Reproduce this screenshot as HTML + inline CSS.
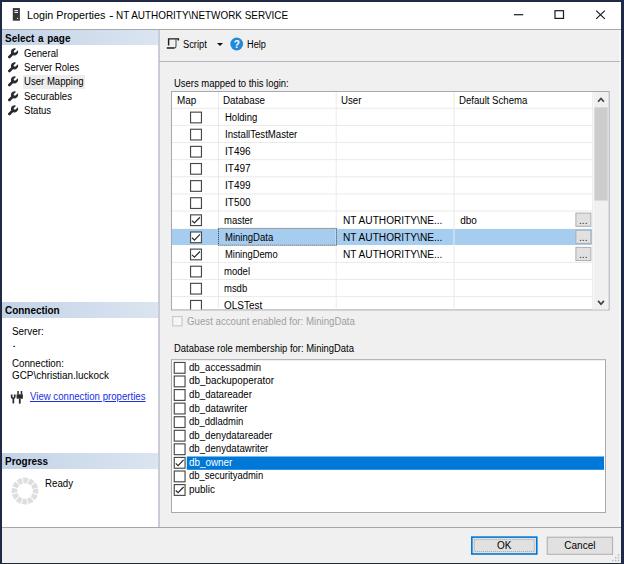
<!DOCTYPE html>
<html><head><meta charset="utf-8"><title>Login Properties</title>
<style>
html,body{margin:0;padding:0;}
body{width:624px;height:564px;overflow:hidden;background:#1c2b4b;position:relative;font-family:"Liberation Sans",sans-serif;font-size:10px;color:#000;}
.abs,.t{position:absolute;}
.t{white-space:nowrap;line-height:13px;height:13px;transform-origin:0 50%;transform:scaleX(0.935);}
#frame{position:absolute;left:1px;top:1px;width:621px;height:563px;background:#23283a;}
#win{position:absolute;left:2px;top:2px;width:619px;height:561px;background:#f0f0f0;}
#title{position:absolute;left:2px;top:2px;width:619px;height:27px;background:#fff;}
#titleline{position:absolute;left:2px;top:29px;width:619px;height:1px;background:#a9a9a9;}
#left{position:absolute;left:2px;top:30px;width:156px;height:497px;background:#fff;}
.hdr{position:absolute;left:2px;width:156px;height:15px;background:linear-gradient(90deg,#c3d3e7 0%,#dbe5f1 100%);}
.hdr span{position:absolute;left:3px;top:1.600px;font-weight:bold;font-size:10.3px;line-height:13px;white-space:nowrap;transform-origin:0 50%;transform:scaleX(0.965);word-spacing:1px;}
.cb{position:absolute;width:11px;height:11px;border:1px solid #333;background:#fff;box-sizing:content-box;}
.hl{position:absolute;height:1px;background:#e8e8e8;}
.vl{position:absolute;width:1px;background:#e8e8e8;}
</style></head><body>
<div id="frame"></div>
<div id="win"></div>
<div id="title"></div>
<div id="titleline"></div>
<div id="left"></div>
<svg class="abs" style="left:0;top:0" width="624" height="564" viewBox="0 0 624 564"><rect x="158.400" y="30" width="1.300" height="497" fill="#b6bac6"/><rect x="619.500" y="30" width="1" height="497" fill="#fbfbfb"/></svg>

<!-- title -->
<svg class="abs" style="left:0;top:0" width="40" height="30" viewBox="0 0 40 30"><rect x="12.800" y="8.100" width="7.100" height="12.600" fill="#363636"/><rect x="14.400" y="10" width="3.600" height="1.100" fill="#e8e8e8"/><rect x="14.400" y="11.900" width="3.600" height="1.100" fill="#e8e8e8"/><rect x="17" y="17.900" width="1.100" height="1.100" fill="#f4f4f4"/></svg>
<div class="abs" id="ttl" style="left:0;top:7.700px;width:300px;height:15px;font-size:11.200px"><span class="t" style="left:27.200px;top:0;line-height:15px;height:15px;transform:scaleX(0.962)">Login Properties</span> <span class="t" style="left:108.500px;top:0;line-height:15px;height:15px;transform:scaleX(1.23)">-</span> <span class="t" style="left:116.100px;top:0;line-height:15px;height:15px;transform:scaleX(0.886)">NT AUTHORITY\NETWORK SERVICE</span></div>
<svg class="abs" style="left:500px;top:2px" width="121" height="27" viewBox="0 0 121 27">
<path d="M14 12.700h9.200" stroke="#1a1a1a" stroke-width="1.200" fill="none"/>
<rect x="55" y="8.700" width="8.500" height="7.700" stroke="#1a1a1a" stroke-width="1.200" fill="none"/>
<path d="M96.200 8.600l8.600 8.300M104.800 8.600l-8.600 8.300" stroke="#1a1a1a" stroke-width="1.200" fill="none"/>
</svg>

<!-- left panel -->
<div class="hdr" style="top:30px"><span>Select a page</span></div>
<div class="abs" style="left:22.500px;top:75px;width:62.500px;height:13.500px;background:#ededed"></div>
<svg class="abs" style="left:8px;top:47.5px" width="11" height="11" viewBox="0 0 11 11"><g transform="translate(6.500 3.900) rotate(45)" fill="#2b2b2b"><path d="M1.200 -3.400A3.600 3.600 0 1 1 -1.200 -3.400L-1.200 -0.600A1.200 1.200 0 0 0 1.200 -0.600Z"/><path d="M-1.350 2.500h2.700v4.700a1.350 1.350 0 0 1 -2.700 0Z"/></g></svg>
<div class="t" style="left:23.600px;top:46.6px;transform:scaleX(0.958)">General</div>
<svg class="abs" style="left:8px;top:61.9px" width="11" height="11" viewBox="0 0 11 11"><g transform="translate(6.500 3.900) rotate(45)" fill="#2b2b2b"><path d="M1.200 -3.400A3.600 3.600 0 1 1 -1.200 -3.400L-1.200 -0.600A1.200 1.200 0 0 0 1.200 -0.600Z"/><path d="M-1.350 2.500h2.700v4.700a1.350 1.350 0 0 1 -2.700 0Z"/></g></svg>
<div class="t" style="left:23.600px;top:61.0px;transform:scaleX(0.958)">Server Roles</div>
<svg class="abs" style="left:8px;top:76.3px" width="11" height="11" viewBox="0 0 11 11"><g transform="translate(6.500 3.900) rotate(45)" fill="#2b2b2b"><path d="M1.200 -3.400A3.600 3.600 0 1 1 -1.200 -3.400L-1.200 -0.600A1.200 1.200 0 0 0 1.200 -0.600Z"/><path d="M-1.350 2.500h2.700v4.700a1.350 1.350 0 0 1 -2.700 0Z"/></g></svg>
<div class="t" style="left:23.600px;top:75.4px;transform:scaleX(0.958)">User Mapping</div>
<svg class="abs" style="left:8px;top:90.7px" width="11" height="11" viewBox="0 0 11 11"><g transform="translate(6.500 3.900) rotate(45)" fill="#2b2b2b"><path d="M1.200 -3.400A3.600 3.600 0 1 1 -1.200 -3.400L-1.200 -0.600A1.200 1.200 0 0 0 1.200 -0.600Z"/><path d="M-1.350 2.500h2.700v4.700a1.350 1.350 0 0 1 -2.700 0Z"/></g></svg>
<div class="t" style="left:23.600px;top:89.8px;transform:scaleX(0.958)">Securables</div>
<svg class="abs" style="left:8px;top:105.1px" width="11" height="11" viewBox="0 0 11 11"><g transform="translate(6.500 3.900) rotate(45)" fill="#2b2b2b"><path d="M1.200 -3.400A3.600 3.600 0 1 1 -1.200 -3.400L-1.200 -0.600A1.200 1.200 0 0 0 1.200 -0.600Z"/><path d="M-1.350 2.500h2.700v4.700a1.350 1.350 0 0 1 -2.700 0Z"/></g></svg>
<div class="t" style="left:23.600px;top:104.2px;transform:scaleX(0.958)">Status</div>

<div class="hdr" style="top:302px;height:16px"><span>Connection</span></div>
<div class="t" style="left:12.300px;top:325px;transform:scaleX(0.985)">Server:</div>
<div class="t" style="left:12.300px;top:337.300px;transform:scaleX(1.5)">.</div>
<div class="t" style="left:12px;top:357.100px;transform:scaleX(0.972)">Connection:</div>
<div class="t" style="left:12px;top:368.600px;transform:scaleX(0.99)">GCP\christian.luckock</div>
<svg class="abs" style="left:0;top:0" width="624" height="564" viewBox="0 0 624 564"><g fill="#2b2b2b"><path d="M11.650 394.400v2.300a1.550 1.550 0 0 0 3.100 0v-2.300" fill="none" stroke="#2b2b2b" stroke-width="1.700"/><rect x="12.500" y="398.600" width="1.700" height="4.800"/><rect x="17.300" y="391" width="1.500" height="3.500"/><rect x="20.700" y="391" width="1.500" height="3.500"/><rect x="16.600" y="394.300" width="6.300" height="4.400"/><rect x="18.900" y="398.600" width="1.800" height="5"/></g></svg>
<div class="t" style="left:29.800px;top:390.300px;color:#1a2fe0;text-decoration:underline;transform:scaleX(0.963)">View connection properties</div>

<div class="hdr" style="top:453px;height:16px"><span>Progress</span></div>
<div class="t" style="left:44.900px;top:476.600px;transform:scaleX(0.969)">Ready</div>
<svg class="abs" style="left:9.500px;top:476px" width="30" height="30" viewBox="-15 -15 30 30"><circle cx="0" cy="0" r="10.650" fill="none" stroke="#dedede" stroke-width="5.600" stroke-dasharray="4.500 1.076" transform="rotate(-11)"/></svg>

<!-- toolbar -->
<div class="abs" style="left:159px;top:61px;width:461px;height:1px;background:#b2b6c2"></div>
<svg class="abs" style="left:166px;top:38px" width="14" height="12" viewBox="0 0 14 12"><path d="M2.600 7.500V0.900H12.400V2.400" stroke="#1c1c1c" stroke-width="1.400" fill="none"/><path d="M10 1V8.300Q10 10 8.300 10" stroke="#555" stroke-width="1.100" fill="none"/><path d="M0.800 10H8.500" stroke="#1c1c1c" stroke-width="1.500" fill="none"/></svg>
<div class="t" style="left:183.300px;top:37.700px;transform:scaleX(0.931)">Script</div>
<div class="abs" style="left:217px;top:42.500px;width:0;height:0;border-left:3px solid transparent;border-right:3px solid transparent;border-top:3px solid #111"></div>
<svg class="abs" style="left:230px;top:37px" width="14" height="14" viewBox="0 0 14 14"><circle cx="6.700" cy="7" r="6.400" fill="#2089dc"/><text x="6.700" y="10.600" text-anchor="middle" font-family="Liberation Sans, sans-serif" font-weight="bold" font-size="10" fill="#fff">?</text></svg>
<div class="t" style="left:247.200px;top:37.700px;transform:scaleX(0.918)">Help</div>

<!-- grid -->
<svg class="abs" style="left:0;top:0" width="624" height="564" viewBox="0 0 624 564"><defs><clipPath id="gclip"><rect x="172" y="92" width="436.6" height="217.4"/></clipPath></defs>
<rect x="171" y="91" width="438.6" height="219.4" fill="#a5a9b4"/>
<rect x="172" y="92" width="436.6" height="217.4" fill="#fff"/>
<g clip-path="url(#gclip)">
<rect x="172" y="228.9" width="420.3" height="16.1" fill="#a6cdf0"/>
<rect x="172" y="107.8" width="421.2" height="1" fill="#eaeaea"/>
<rect x="172" y="124.92" width="421.2" height="1" fill="#eaeaea"/>
<rect x="172" y="142.04" width="421.2" height="1" fill="#eaeaea"/>
<rect x="172" y="159.16" width="421.2" height="1" fill="#eaeaea"/>
<rect x="172" y="176.28" width="421.2" height="1" fill="#eaeaea"/>
<rect x="172" y="193.4" width="421.2" height="1" fill="#eaeaea"/>
<rect x="172" y="210.52" width="421.2" height="1" fill="#eaeaea"/>
<rect x="592.3" y="227.64" width="0.7" height="1" fill="#eaeaea"/>
<rect x="592.3" y="244.76" width="0.7" height="1" fill="#eaeaea"/>
<rect x="172" y="261.88" width="421.2" height="1" fill="#eaeaea"/>
<rect x="172" y="279" width="421.2" height="1" fill="#eaeaea"/>
<rect x="172" y="296.12" width="421.2" height="1" fill="#eaeaea"/>
<rect x="172" y="313.24" width="421.2" height="1" fill="#eaeaea"/>
<rect x="217.9" y="92" width="1" height="218" fill="#eaeaea"/>
<rect x="335.7" y="92" width="1" height="218" fill="#eaeaea"/>
<rect x="453.5" y="92" width="1" height="218" fill="#eaeaea"/>
<rect x="592.2" y="92" width="1" height="218" fill="#eaeaea"/>
<rect x="217.9" y="228.6" width="1" height="16.6" fill="#a6cdf0"/>
<rect x="335.7" y="229.2" width="1" height="15.5" fill="#c4def5"/>
<rect x="453.5" y="229.2" width="1" height="15.5" fill="#c4def5"/>
<rect x="218.5" y="228.4" width="118" height="16.9" fill="none" stroke="#333" stroke-width="1" stroke-dasharray="1 1"/>
<rect x="190.55" y="112.15" width="10.9" height="10.7" fill="#fff" stroke="#484848" stroke-width="1.15"/>
<rect x="190.55" y="129.27" width="10.9" height="10.7" fill="#fff" stroke="#484848" stroke-width="1.15"/>
<rect x="190.55" y="146.39" width="10.9" height="10.7" fill="#fff" stroke="#484848" stroke-width="1.15"/>
<rect x="190.55" y="163.51" width="10.9" height="10.7" fill="#fff" stroke="#484848" stroke-width="1.15"/>
<rect x="190.55" y="180.63" width="10.9" height="10.7" fill="#fff" stroke="#484848" stroke-width="1.15"/>
<rect x="190.55" y="197.75" width="10.9" height="10.7" fill="#fff" stroke="#484848" stroke-width="1.15"/>
<rect x="190.55" y="214.87" width="10.9" height="10.7" fill="#fff" stroke="#484848" stroke-width="1.15"/>
<path d="M192.04 220.69L194.44 222.93L199.96 217.27" stroke="#2a2a2a" stroke-width="1.2" fill="none"/>
<rect x="575.9" y="213.12" width="15" height="13.2" fill="#e1e1e1" stroke="#adadad" stroke-width="1"/>
<rect x="190.55" y="231.99" width="10.9" height="10.7" fill="#fff" stroke="#484848" stroke-width="1.15"/>
<path d="M192.04 237.81L194.44 240.05L199.96 234.39" stroke="#2a2a2a" stroke-width="1.2" fill="none"/>
<rect x="575.9" y="230.24" width="15" height="13.2" fill="#e1e1e1" stroke="#adadad" stroke-width="1"/>
<rect x="190.55" y="249.11" width="10.9" height="10.7" fill="#fff" stroke="#484848" stroke-width="1.15"/>
<path d="M192.04 254.93L194.44 257.17L199.96 251.51" stroke="#2a2a2a" stroke-width="1.2" fill="none"/>
<rect x="575.9" y="247.36" width="15" height="13.2" fill="#e1e1e1" stroke="#adadad" stroke-width="1"/>
<rect x="190.55" y="266.23" width="10.9" height="10.7" fill="#fff" stroke="#484848" stroke-width="1.15"/>
<rect x="190.55" y="283.35" width="10.9" height="10.7" fill="#fff" stroke="#484848" stroke-width="1.15"/>
<rect x="190.55" y="300.47" width="10.9" height="10.7" fill="#fff" stroke="#484848" stroke-width="1.15"/>
<rect x="593.7" y="92" width="14.2" height="218" fill="#f0f0f0"/>
<rect x="594.4" y="107.3" width="13.3" height="93.3" fill="#cdcdcd"/>
<path d="M598.1 101.8L601 98.5L603.9 101.8" stroke="#404040" stroke-width="1.7" fill="none"/>
<path d="M598.1 300.9L601 304.2L603.9 300.9" stroke="#404040" stroke-width="1.7" fill="none"/>
</g>
<rect x="172.75" y="316.55" width="9.3" height="9.3" fill="#f6f6f6" stroke="#c8c8c8" stroke-width="1.15"/>
<rect x="171" y="359.2" width="435" height="153.8" fill="#a5a9b4"/>
<rect x="172" y="360.2" width="433" height="151.8" fill="#fff"/>
<rect x="174.25" y="362.45" width="10.8" height="10.8" fill="#fff" stroke="#484848" stroke-width="1.15"/>
<rect x="174.25" y="376.02" width="10.8" height="10.8" fill="#fff" stroke="#484848" stroke-width="1.15"/>
<rect x="174.25" y="389.59" width="10.8" height="10.8" fill="#fff" stroke="#484848" stroke-width="1.15"/>
<rect x="174.25" y="403.16" width="10.8" height="10.8" fill="#fff" stroke="#484848" stroke-width="1.15"/>
<rect x="174.25" y="416.73" width="10.8" height="10.8" fill="#fff" stroke="#484848" stroke-width="1.15"/>
<rect x="174.25" y="430.3" width="10.8" height="10.8" fill="#fff" stroke="#484848" stroke-width="1.15"/>
<rect x="174.25" y="443.87" width="10.8" height="10.8" fill="#fff" stroke="#484848" stroke-width="1.15"/>
<rect x="186.8" y="456.49" width="417.2" height="13.3" fill="#0078d7"/>
<rect x="174.25" y="457.44" width="10.8" height="10.8" fill="#fff" stroke="#484848" stroke-width="1.15"/>
<path d="M175.72 463.32L178.1 465.58L183.58 459.87" stroke="#2a2a2a" stroke-width="1.2" fill="none"/>
<rect x="174.25" y="471.01" width="10.8" height="10.8" fill="#fff" stroke="#484848" stroke-width="1.15"/>
<rect x="174.25" y="484.58" width="10.8" height="10.8" fill="#fff" stroke="#484848" stroke-width="1.15"/>
<path d="M175.72 490.46L178.1 492.72L183.58 487" stroke="#2a2a2a" stroke-width="1.2" fill="none"/>
</svg>
<div class="t" style="left:224.9px;top:110.8px;transform:scaleX(0.950);">Holding</div>
<div class="t" style="left:224.9px;top:127.92px;transform:scaleX(0.963);">InstallTestMaster</div>
<div class="t" style="left:224.9px;top:145.04px;transform:scaleX(1.004);">IT496</div>
<div class="t" style="left:224.9px;top:162.16px;transform:scaleX(1.004);">IT497</div>
<div class="t" style="left:224.9px;top:179.28px;transform:scaleX(1.004);">IT499</div>
<div class="t" style="left:224.9px;top:196.4px;transform:scaleX(1.004);">IT500</div>
<div class="t" style="left:224.2px;top:213.52px;transform:scaleX(0.948);">master</div>
<div class="t" style="left:342.5px;top:213.52px;transform:scaleX(1.013);">NT AUTHORITY\NE...</div>
<div class="t" style="left:579.1px;top:213.82px;transform:none;color:#222">...</div>
<div class="t" style="left:460.2px;top:213.52px;transform:scaleX(1.000);">dbo</div>
<div class="t" style="left:224.9px;top:230.64px;transform:scaleX(0.953);">MiningData</div>
<div class="t" style="left:342.5px;top:230.64px;transform:scaleX(1.013);">NT AUTHORITY\NE...</div>
<div class="t" style="left:579.1px;top:230.94px;transform:none;color:#222">...</div>
<div class="t" style="left:224.9px;top:247.76px;transform:scaleX(0.938);">MiningDemo</div>
<div class="t" style="left:342.5px;top:247.76px;transform:scaleX(1.013);">NT AUTHORITY\NE...</div>
<div class="t" style="left:579.1px;top:248.06px;transform:none;color:#222">...</div>
<div class="t" style="left:224.2px;top:264.88px;transform:scaleX(0.956);">model</div>
<div class="t" style="left:224.2px;top:282px;transform:scaleX(0.947);">msdb</div>
<div class="t" style="left:224.2px;top:299.12px;transform:scaleX(0.995);">OLSTest</div>
<div class="t" style="left:177.2px;top:94px;transform:scaleX(0.990);">Map</div>
<div class="t" style="left:222.6px;top:94px;transform:scaleX(0.981);">Database</div>
<div class="t" style="left:341.3px;top:94px;transform:scaleX(0.967);">User</div>
<div class="t" style="left:459px;top:94px;transform:scaleX(0.961);">Default Schema</div>
<div class="t" style="left:173.9px;top:76.9px;transform:scaleX(0.947);">Users mapped to this login:</div>
<div class="t" style="left:173.5px;top:341.9px;transform:scaleX(0.944);">Database role membership for: MiningData</div>
<div class="t" style="left:187.2px;top:314.6px;transform:scaleX(0.968);color:#a0a0a0">Guest account enabled for: MiningData</div>
<div class="t" style="left:189.2px;top:360.8px;transform:scaleX(0.961);">db_accessadmin</div>
<div class="t" style="left:189.2px;top:374.37px;transform:scaleX(0.987);">db_backupoperator</div>
<div class="t" style="left:189.2px;top:387.94px;transform:scaleX(0.968);">db_datareader</div>
<div class="t" style="left:189.2px;top:401.51px;transform:scaleX(0.967);">db_datawriter</div>
<div class="t" style="left:189.2px;top:415.08px;transform:scaleX(0.948);">db_ddladmin</div>
<div class="t" style="left:189.2px;top:428.65px;transform:scaleX(0.963);">db_denydatareader</div>
<div class="t" style="left:189.2px;top:442.22px;transform:scaleX(0.964);">db_denydatawriter</div>
<div class="t" style="left:189.2px;top:455.79px;transform:scaleX(0.984);color:#fff">db_owner</div>
<div class="t" style="left:189.2px;top:469.36px;transform:scaleX(0.946);">db_securityadmin</div>
<div class="t" style="left:189.2px;top:482.93px;transform:scaleX(0.992);">public</div>

<!-- bottom -->
<svg class="abs" style="left:0;top:0" width="624" height="564" viewBox="0 0 624 564">
<rect x="2" y="527" width="619" height="1" fill="#a6a6a6"/>
<rect x="471" y="536.300" width="66.600" height="18.500" fill="#0078d7"/>
<rect x="472.600" y="537.900" width="63.400" height="15.300" fill="#e1e1e1"/>
<rect x="474.300" y="539.600" width="60" height="11.900" fill="none" stroke="#8a8a8a" stroke-width="0.700" stroke-dasharray="1 1"/>
<rect x="546.700" y="536.700" width="66.400" height="18.100" fill="#adadad"/>
<rect x="547.700" y="537.700" width="64.400" height="16.100" fill="#e1e1e1"/>
<g fill="#b4b4b4"><rect x="617.800" y="554.300" width="1.400" height="1.400"/><rect x="615" y="557" width="1.400" height="1.400"/><rect x="617.800" y="557" width="1.400" height="1.400"/><rect x="612.300" y="559.800" width="1.400" height="1.400"/><rect x="615" y="559.800" width="1.400" height="1.400"/><rect x="617.800" y="559.800" width="1.400" height="1.400"/></g>
</svg>
<div class="t" style="left:471px;top:539.400px;width:66.600px;text-align:center;transform:none">OK</div>
<div class="t" style="left:546.700px;top:539.400px;width:66.400px;text-align:center;transform:none">Cancel</div>
</body></html>
